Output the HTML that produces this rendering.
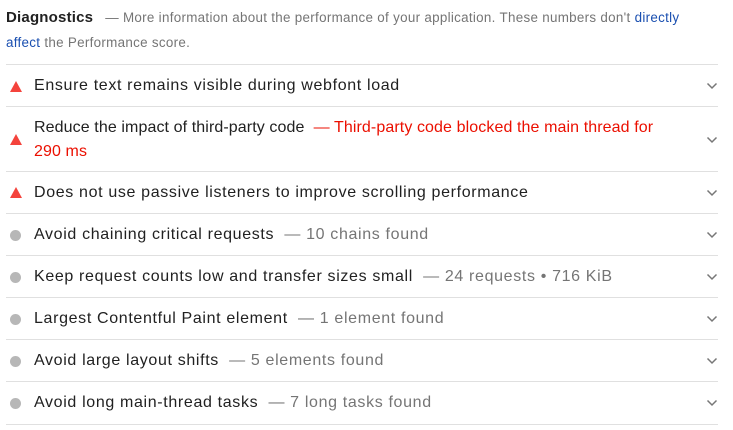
<!DOCTYPE html>
<html><head><style>
body{margin:0;background:#fff;font-family:"Liberation Sans",sans-serif;width:733px;height:430px;overflow:hidden}
.hdr{position:absolute;left:6px;top:5px;width:690px;line-height:25px;font-size:13.4px;color:#757575;letter-spacing:0.3px}
.hdr b{font-size:15px;color:#212121;font-weight:bold;margin-right:12px;letter-spacing:0.2px}
.hdr a{color:#1a4fb0;text-decoration:none}
.row{position:absolute;left:6px;width:712px;border-top:1px solid #e0e0e0;font-size:16px;letter-spacing:0.65px;color:#212121}
.row .t{position:absolute;left:28px;line-height:24px}
.sub{color:#757575}
.red{color:#eb0f00}
.tri{position:absolute;left:4px;width:0;height:0;border-left:6px solid transparent;border-right:6px solid transparent;border-bottom:11px solid #f4433c}
.dot{position:absolute;left:4px;width:11px;height:11px;border-radius:50%;background:#b7b7b7}
.chev{position:absolute;right:0;width:12px;height:8px}
</style></head><body>
<div class="hdr"><b>Diagnostics</b>— More information about the performance of your application. These numbers don't <a>directly affect</a> the Performance score.</div>

<div class="row" style="top:64px;height:42px"><div class="tri" style="top:16px"></div><div class="t" style="top:9px">Ensure text remains visible during webfont load</div><svg class="chev" style="top:17px" viewBox="0 0 12 8"><path d="M1.5 1.5 6 6l4.5-4.5" fill="none" stroke="#777" stroke-width="1.5"/></svg></div>

<div class="row" style="top:106px;height:65px"><div class="tri" style="top:27px"></div><div class="t" style="top:9px;line-height:24px;letter-spacing:0.1px"><span style="white-space:nowrap">Reduce the impact of third-party code &nbsp;<span class="red">— Third-party code blocked the main thread for</span></span><br><span class="red">290 ms</span></div><svg class="chev" style="top:29px" viewBox="0 0 12 8"><path d="M1.5 1.5 6 6l4.5-4.5" fill="none" stroke="#777" stroke-width="1.5"/></svg></div>

<div class="row" style="top:171px;height:42px"><div class="tri" style="top:15px"></div><div class="t" style="top:9px">Does not use passive listeners to improve scrolling performance</div><svg class="chev" style="top:17px" viewBox="0 0 12 8"><path d="M1.5 1.5 6 6l4.5-4.5" fill="none" stroke="#777" stroke-width="1.5"/></svg></div>

<div class="row" style="top:213px;height:42px"><div class="dot" style="top:16px"></div><div class="t" style="top:9px">Avoid chaining critical requests &nbsp;<span class="sub">— 10 chains found</span></div><svg class="chev" style="top:17px" viewBox="0 0 12 8"><path d="M1.5 1.5 6 6l4.5-4.5" fill="none" stroke="#777" stroke-width="1.5"/></svg></div>

<div class="row" style="top:255px;height:42px"><div class="dot" style="top:16px"></div><div class="t" style="top:9px">Keep request counts low and transfer sizes small &nbsp;<span class="sub">— 24 requests • 716 KiB</span></div><svg class="chev" style="top:17px" viewBox="0 0 12 8"><path d="M1.5 1.5 6 6l4.5-4.5" fill="none" stroke="#777" stroke-width="1.5"/></svg></div>

<div class="row" style="top:297px;height:42px"><div class="dot" style="top:16px"></div><div class="t" style="top:9px">Largest Contentful Paint element &nbsp;<span class="sub">— 1 element found</span></div><svg class="chev" style="top:17px" viewBox="0 0 12 8"><path d="M1.5 1.5 6 6l4.5-4.5" fill="none" stroke="#777" stroke-width="1.5"/></svg></div>

<div class="row" style="top:339px;height:42px"><div class="dot" style="top:16px"></div><div class="t" style="top:9px">Avoid large layout shifts &nbsp;<span class="sub">— 5 elements found</span></div><svg class="chev" style="top:17px" viewBox="0 0 12 8"><path d="M1.5 1.5 6 6l4.5-4.5" fill="none" stroke="#777" stroke-width="1.5"/></svg></div>

<div class="row" style="top:381px;height:42px;border-bottom:1px solid #e0e0e0"><div class="dot" style="top:16px"></div><div class="t" style="top:9px">Avoid long main-thread tasks &nbsp;<span class="sub">— 7 long tasks found</span></div><svg class="chev" style="top:17px" viewBox="0 0 12 8"><path d="M1.5 1.5 6 6l4.5-4.5" fill="none" stroke="#777" stroke-width="1.5"/></svg></div>
</body></html>
